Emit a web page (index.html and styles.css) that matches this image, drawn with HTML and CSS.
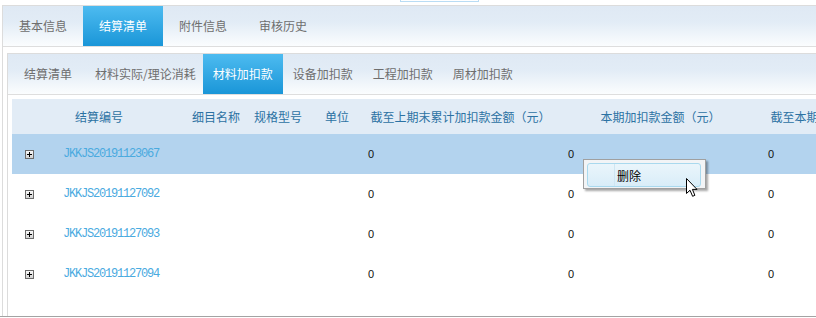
FILE: index.html
```html
<!DOCTYPE html>
<html lang="zh-CN">
<head>
  <meta charset="UTF-8" />
  <title>结算清单</title>
  <link rel="stylesheet" href="styles.css">
</head>
<body>
  <div class="top-strip"><span class="mini-box"></span></div>

  <div class="frame">
    <ul class="tabs">
      <li class="tab">基本信息</li>
      <li class="tab active">结算清单</li>
      <li class="tab">附件信息</li>
      <li class="tab">审核历史</li>
    </ul>

    <div class="frame inner">
      <ul class="tabs">
        <li class="tab">结算清单</li>
        <li class="tab">材料实际/理论消耗</li>
        <li class="tab active">材料加扣款</li>
        <li class="tab">设备加扣款</li>
        <li class="tab">工程加扣款</li>
        <li class="tab">周材加扣款</li>
      </ul>

      <table class="grid">
        <colgroup>
          <col class="c-exp"><col class="c-code"><col class="c-name"><col class="c-spec">
          <col class="c-unit"><col class="c-amt"><col class="c-amt"><col class="c-amt">
        </colgroup>
        <thead>
          <tr>
            <th></th>
            <th class="th-code">结算编号</th>
            <th class="th-name">细目名称</th>
            <th class="th-spec">规格型号</th>
            <th class="th-unit">单位</th>
            <th class="th-amt">截至上期末累计加扣款金额（元）</th>
            <th class="th-amt">本期加扣款金额（元）</th>
            <th class="th-amt">截至本期末累计加扣款金额（元）</th>
          </tr>
        </thead>
        <tbody>
          <tr class="selected">
            <td><span class="expander"></span></td>
            <td><a class="code">JKKJS20191123067</a></td>
            <td></td><td></td><td></td>
            <td class="num">0</td><td class="num">0</td><td class="num">0</td>
          </tr>
          <tr>
            <td><span class="expander"></span></td>
            <td><a class="code">JKKJS20191127092</a></td>
            <td></td><td></td><td></td>
            <td class="num">0</td><td class="num">0</td><td class="num">0</td>
          </tr>
          <tr>
            <td><span class="expander"></span></td>
            <td><a class="code">JKKJS20191127093</a></td>
            <td></td><td></td><td></td>
            <td class="num">0</td><td class="num">0</td><td class="num">0</td>
          </tr>
          <tr>
            <td><span class="expander"></span></td>
            <td><a class="code">JKKJS20191127094</a></td>
            <td></td><td></td><td></td>
            <td class="num">0</td><td class="num">0</td><td class="num">0</td>
          </tr>
        </tbody>
      </table>
    </div>
  </div>
  <div class="baseline"></div>

  <div class="context-menu">
    <div class="menu-item"><span class="gutter"></span>删除</div>
  </div>

  <svg class="cursor" width="13" height="20" viewBox="0 0 13 20">
    <polygon points="0.5,0.5 0.5,15.5 4,12.2 6.6,18.3 8.9,17.3 6.4,11.4 11,11.4" fill="#fff" stroke="#000" stroke-width="1"/>
  </svg>
</body>
</html>
```

FILE: styles.css
```css
body {
  margin: 0;
  width: 816px;
  height: 318px;
  overflow: hidden;
  background: #fff;
  font-family: "Noto Sans CJK SC", "Liberation Sans", sans-serif;
  font-size: 12px;
  position: relative;
}

.top-strip {
  height: 5px;
}

.mini-box {
  display: block;
  margin-left: 400px;
  width: 77px;
  height: 1px;
  border: 1px solid #b9dcf4;
  border-top: 0;
}

.frame {
  margin-left: 2px;
  height: 310px;
  border-left: 1px solid #dcdcdc;
  border-top: 1px solid #dcdcdc;
  overflow: hidden;
}

.frame.inner {
  margin: 6px 0 0 4px;
  height: 262px;
}

.baseline {
  height: 1px;
  background: #a3a3a3;
}

.tabs {
  list-style: none;
  margin: 0;
  padding: 0;
  display: flex;
  height: 40px;
  border-bottom: 1px solid #dedede;
  background: linear-gradient(#dfe9f4 0%, #e2ecf6 40%, #fbfdfe 100%);
}

.tab {
  min-width: 80px;
  padding: 0 7px;
  box-sizing: border-box;
  line-height: 40px;
  text-align: center;
  color: #6e6e6e;
  white-space: nowrap;
}

.tab.active {
  color: #fff;
  background: linear-gradient(#4dbbf0, #1a96d8);
}

.grid {
  margin: 4px 0 0 4px;
  width: 947px;
  table-layout: fixed;
  border-collapse: collapse;
}

.c-exp { width: 38px; }
.c-code { width: 130px; }
.c-name { width: 68px; }
.c-spec { width: 64px; }
.c-unit { width: 47px; }
.c-amt { width: 200px; }

.grid th {
  height: 35px;
  padding: 0;
  background: #e2ecf6;
  color: #2c72a3;
  font-weight: normal;
  text-align: left;
  white-space: nowrap;
}

.grid .th-code { padding-left: 25px; }
.grid .th-name { padding-left: 12px; }
.grid .th-spec { padding-left: 6px; }
.grid .th-unit { padding-left: 13px; }
.grid .th-amt { text-align: center; padding-left: 3px; }

.grid td {
  height: 40px;
  padding: 0;
}

.grid tr.selected td {
  background: #b3d3ee;
}

.expander {
  display: block;
  margin-left: 13px;
  width: 7px;
  height: 7px;
  border: 1px solid #6b6b6b;
  background: linear-gradient(#fafafa, #d2d2d2);
  position: relative;
}

.expander::before,
.expander::after {
  content: "";
  position: absolute;
  background: #000;
}

.expander::before {
  left: 1px;
  top: 3px;
  width: 5px;
  height: 1px;
}

.expander::after {
  left: 3px;
  top: 1px;
  width: 1px;
  height: 5px;
}

.code {
  display: block;
  padding-left: 13px;
  font-family: "Liberation Mono", "DejaVu Sans Mono", monospace;
  font-size: 12px;
  letter-spacing: -1.2px;
  color: #4aaadf;
  white-space: nowrap;
}

.grid td.num {
  padding-left: 9px;
  font-family: "Liberation Sans", sans-serif;
  font-size: 11px;
  color: #111;
}

.context-menu {
  position: absolute;
  left: 583px;
  top: 159px;
  width: 123px;
  height: 30px;
  padding: 3px 4px 0 3px;
  box-sizing: border-box;
  border: 1px solid #a0a0a0;
  background: #f2f4f6;
  box-shadow: 2px 2px 2px rgba(0, 0, 0, 0.35);
}

.menu-item {
  display: flex;
  align-items: center;
  height: 22px;
  border: 1px solid #a9d9ee;
  border-radius: 3px;
  background: linear-gradient(#eaf5fb, #d9edf8);
  color: #000;
  font-size: 12px;
}

.gutter {
  width: 26px;
  height: 100%;
  margin-right: 2px;
  border-right: 1px solid #cfe6f2;
}

.cursor {
  position: absolute;
  left: 686px;
  top: 178px;
}
```
